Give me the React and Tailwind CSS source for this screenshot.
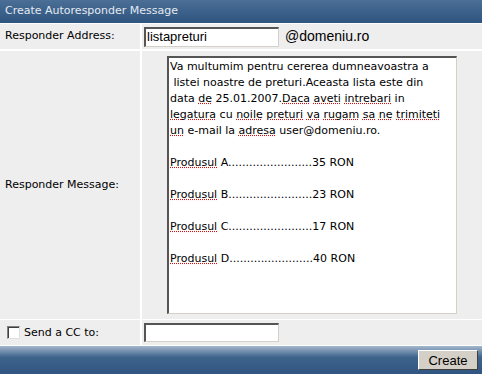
import React from 'react';

const sp = 'underline decoration-dotted decoration-[#d01010]';

const products = [
  ['A', '........................', '35'],
  ['B', '........................', '23'],
  ['C', '........................', '17'],
  ['D', '........................', '40'],
];

function Row({ label, children, height = 'h-[25px]', align = 'items-center' }) {
  return (
    <div className={`flex gap-[2px] ${height}`}>
      <div className="w-[140px] bg-[#eeeeee] flex items-center pl-[5px]">{label}</div>
      <div className={`flex-1 bg-[#eeeeee] flex ${align}`}>{children}</div>
    </div>
  );
}

export default function App() {
  return (
    <div
      className="w-[482px] h-[374px] bg-white flex flex-col overflow-hidden text-[11px] text-black"
      style={{ fontFamily: '"DejaVu Sans", Verdana, sans-serif' }}
    >
      <div className="h-[23px] shrink-0 bg-gradient-to-b from-[#4b6f96] via-[#3c618a] to-[#2f5580] text-[#e4eaf1] flex items-center pl-[5px] mb-px">
        Create Autoresponder Message
      </div>

      <Row label="Responder Address:">
        <div className="ml-[2px] w-[135px] h-[20px] bg-white border-t-2 border-l-2 border-t-[#555] border-l-[#555] border-b border-r border-b-[#d4d0c8] border-r-[#d4d0c8] flex items-center pl-[1px] text-[13px] font-['Liberation_Sans',Arial,sans-serif]">
          listapreturi
        </div>
        <span className="ml-[6px] text-[14px] font-['Liberation_Sans',Arial,sans-serif]">@domeniu.ro</span>
      </Row>

      <div className="h-[2px] shrink-0" />

      <Row label="Responder Message:" height="h-[268px]" align="items-center justify-center">
        <div className="w-[290px] h-[258px] bg-white border-t-2 border-l-2 border-t-[#555] border-l-[#555] border-b border-r border-b-[#d4d0c8] border-r-[#d4d0c8] pl-[1px] pt-[1px] leading-[16px] whitespace-pre">
          <div>Va multumim pentru cererea dumneavoastra a</div>
          <div> listei noastre de preturi.Aceasta lista este din</div>
          <div>
            data <span className={sp}>de</span> 25.01.2007.<span className={sp}>Daca</span> <span className={sp}>aveti</span> <span className={sp}>intrebari</span> in
          </div>
          <div>
            <span className={sp}>legatura</span> cu <span className={sp}>noile</span> <span className={sp}>preturi</span> <span className={sp}>va</span> <span className={sp}>rugam</span> <span className={sp}>sa</span> <span className={sp}>ne</span> <span className={sp}>trimiteti</span>
          </div>
          <div>
            <span className={sp}>un</span> e-mail la <span className={sp}>adresa</span> user@domeniu.ro.
          </div>
          {products.map(([l, dots, p]) => (
            <React.Fragment key={l}>
              <div>&nbsp;</div>
              <div>
                <span className={sp}>Produsul</span> {l}{dots}{p} RON
              </div>
            </React.Fragment>
          ))}
        </div>
      </Row>

      <div className="h-px shrink-0" />

      <Row
        label={
          <div className="flex items-center gap-[4px] pl-[2px]">
            <div className="w-[13px] h-[13px] bg-white border-t border-l border-t-[#808080] border-l-[#808080] border-b border-r border-b-[#e0e0e0] border-r-[#e0e0e0] shadow-[inset_1px_1px_0_#404040]" />
            <span className="mt-[2px]">Send a CC to:</span>
          </div>
        }
      >
        <div className="ml-[2px] w-[135px] h-[19px] bg-white border-t-2 border-l-2 border-t-[#555] border-l-[#555] border-b border-r border-b-[#d4d0c8] border-r-[#d4d0c8]" />
      </Row>

      <div className="flex-1 mt-px bg-gradient-to-b from-[#a4b7cc] via-[#3f648c] via-40% to-[#2f5580] flex items-center justify-end pr-[4px]">
        <button className="w-[60px] h-[20px] bg-[#d4d0c8] border-t border-l border-t-white border-l-white border-b border-r border-b-[#404040] border-r-[#404040] text-[13px] font-['Liberation_Sans',Arial,sans-serif] leading-none">
          Create
        </button>
      </div>
    </div>
  );
}
